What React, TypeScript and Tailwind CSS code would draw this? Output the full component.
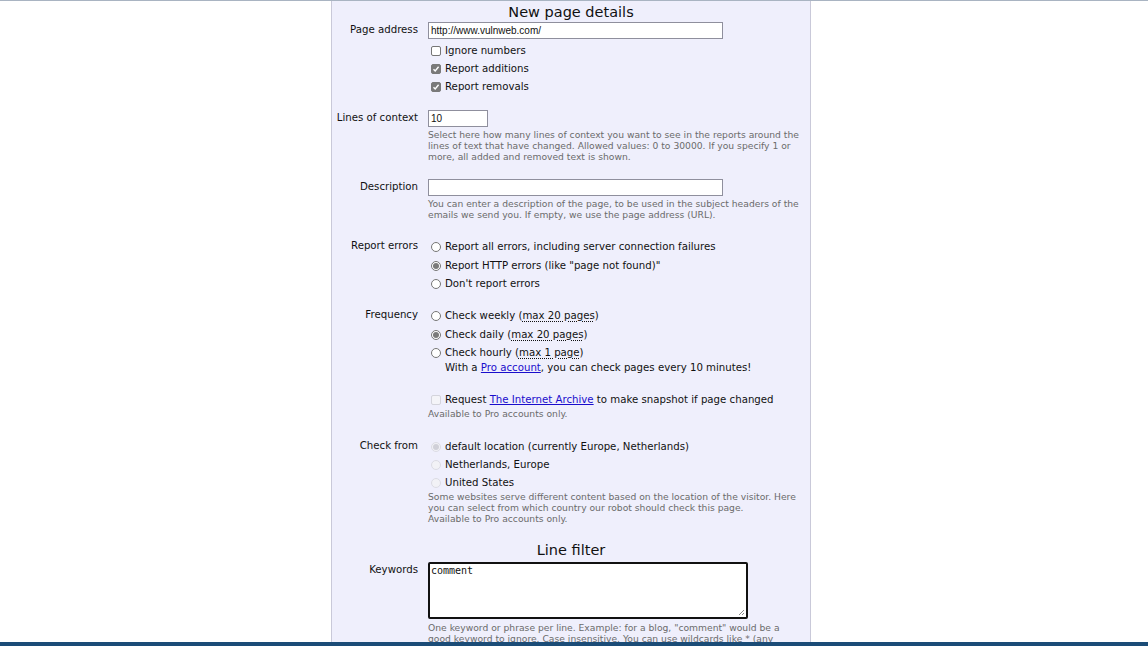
import React from "react";

const font = { fontFamily: '"DejaVu Sans", Verdana, sans-serif' };
const arial = { fontFamily: '"Liberation Sans", Arial, sans-serif' };

function Check({ checked, disabled }: { checked?: boolean; disabled?: boolean }) {
  return (
    <span
      className={`inline-flex items-center justify-center w-[10px] h-[10px] rounded-[2px] border ml-[3px] mr-[4px] shrink-0 ${
        disabled ? "border-[#d4d4dc] bg-[#f4f4f8]" : checked ? "border-[#7a7a7a] bg-[#7a7a7a]" : "border-[#767676] bg-white"
      }`}
    >
      {checked && (
        <svg width="8" height="8" viewBox="0 0 8 8">
          <path d="M1.5 4.2 L3.2 5.9 L6.6 1.8" stroke="white" strokeWidth="1.4" fill="none" />
        </svg>
      )}
    </span>
  );
}

function Radio({ checked, disabled }: { checked?: boolean; disabled?: boolean }) {
  return (
    <span
      className={`inline-flex items-center justify-center w-[10px] h-[10px] rounded-full border ml-[3px] mr-[4px] shrink-0 ${
        disabled ? "border-[#dcdce4] bg-[#f2f2f6]" : "border-[#767676] bg-white"
      }`}
    >
      {checked && <span className={`w-[6px] h-[6px] rounded-full ${disabled ? "bg-[#d0d0d8]" : "bg-[#7a7a7a]"}`} />}
    </span>
  );
}

function Row({ label, children, className = "" }: { label?: string; children: React.ReactNode; className?: string }) {
  return (
    <div className={`flex ${className}`}>
      <div className="w-[86px] shrink-0 text-right text-[10.2px] leading-[16px]">{label}</div>
      <div className="ml-[10px] flex-1 pr-[6px]">{children}</div>
    </div>
  );
}

function Opt({ children, className = "" }: { children: React.ReactNode; className?: string }) {
  return <div className={`flex items-center h-[18px] text-[10.2px] whitespace-nowrap ${className}`}>{children}</div>;
}

function Help({ children, className = "" }: { children: React.ReactNode; className?: string }) {
  return <div className={`text-[9.2px] leading-[11px] text-[#6b6b6b] ${className}`}>{children}</div>;
}

function Abbr({ children }: { children: React.ReactNode }) {
  return <span className="underline decoration-dotted underline-offset-2">{children}</span>;
}

export default function App() {
  return (
    <div className="relative h-[646px] overflow-hidden bg-white border-t border-[#a9b4c2]" style={font}>
      <div className="ml-[331px] w-[480px] h-full bg-[#efeffc] border-x border-[#c9c9d9] text-[#111]">
        <h2 className="text-center text-[14.5px] leading-[20px] pt-[1px]">New page details</h2>

        <Row label="Page address">
          <input
            readOnly
            value="http://www.vulnweb.com/"
            className="block w-[295px] h-[17px] bg-white border border-[#8f8f9d] px-[2px] text-[10px] outline-none"
            style={arial}
          />
        </Row>
        <Row className="mt-[3px]">
          <Opt><Check />Ignore numbers</Opt>
          <Opt><Check checked />Report additions</Opt>
          <Opt><Check checked />Report removals</Opt>
        </Row>

        <Row label="Lines of context" className="mt-[14px]">
          <input
            readOnly
            value="10"
            className="block w-[60px] h-[17px] bg-white border border-[#8f8f9d] px-[2px] text-[10px] outline-none"
            style={arial}
          />
          <Help className="mt-[2px]">
            Select here how many lines of context you want to see in the reports around the lines of text that have changed. Allowed values: 0 to 30000. If you specify 1 or more, all added and removed text is shown.
          </Help>
        </Row>

        <Row label="Description" className="mt-[17px]">
          <input
            readOnly
            value=""
            className="block w-[295px] h-[17px] bg-white border border-[#8f8f9d] px-[2px] text-[10px] outline-none"
          />
          <Help className="mt-[2px]">
            You can enter a description of the page, to be used in the subject headers of the emails we send you. If empty, we use the page address (URL).
          </Help>
        </Row>

        <Row label="Report errors" className="mt-[18px]">
          <Opt><Radio />Report all errors, including server connection failures</Opt>
          <Opt className="mt-[1px]"><Radio checked />Report HTTP errors (like "page not found)"</Opt>
          <Opt><Radio />Don't report errors</Opt>
        </Row>

        <Row label="Frequency" className="mt-[14px]">
          <Opt><Radio />Check weekly (<Abbr>max 20 pages</Abbr>)</Opt>
          <Opt className="mt-[1px]"><Radio checked />Check daily (<Abbr>max 20 pages</Abbr>)</Opt>
          <Opt><Radio />Check hourly (<Abbr>max 1 page</Abbr>)</Opt>
          <div className="text-[10.2px] leading-[12px] ml-[17px] whitespace-nowrap">
            With a <span className="text-[#1a0dcc] underline">Pro account</span>, you can check pages every 10 minutes!
          </div>
        </Row>

        <Row className="mt-[17px]">
          <Opt><Check disabled />Request&nbsp;<span className="text-[#1a0dcc] underline">The Internet Archive</span>&nbsp;to make snapshot if page changed</Opt>
          <Help className="-mt-[1px]">Available to Pro accounts only.</Help>
        </Row>

        <Row label="Check from" className="mt-[19px]">
          <Opt><Radio checked disabled />default location (currently Europe, Netherlands)</Opt>
          <Opt><Radio disabled />Netherlands, Europe</Opt>
          <Opt><Radio disabled />United States</Opt>
          <Help className="-mt-[1px]">
            Some websites serve different content based on the location of the visitor. Here you can select from which country our robot should check this page.
            <br />
            Available to Pro accounts only.
          </Help>
        </Row>

        <h2 className="text-center text-[14.5px] leading-[20px] mt-[16px]">Line filter</h2>

        <Row label="Keywords" className="mt-[2px]">
          <div className="relative w-[320px] h-[57px] bg-white border-2 border-[#111] rounded-[2px]">
            <div className="text-[10px] leading-[12px] pl-[1px] pt-[1px] text-[#111]" style={{ fontFamily: '"DejaVu Sans Mono", monospace' }}>comment</div>
            <svg className="absolute right-[1px] bottom-[1px]" width="7" height="7" viewBox="0 0 7 7">
              <path d="M6 1 L1 6 M6 4 L4 6" stroke="#888" strokeWidth="1" />
            </svg>
          </div>
          <Help className="mt-[3px]">
            One keyword or phrase per line. Example: for a blog, "comment" would be a good keyword to ignore. Case insensitive. You can use wildcards like * (any character).
          </Help>
        </Row>
      </div>
      <div className="absolute left-0 right-0 bottom-0 h-[4px] bg-[#1b4c77]" />
    </div>
  );
}
